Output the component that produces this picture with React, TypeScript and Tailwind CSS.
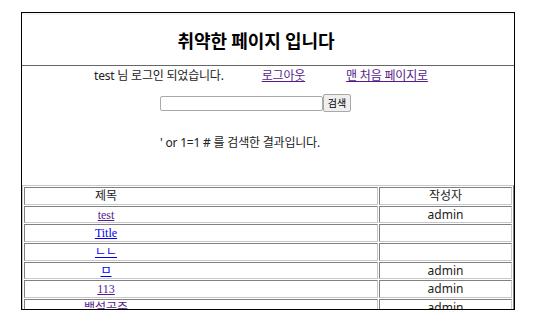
import React from 'react';

const sans = { fontFamily: '"Noto Sans", "Noto Sans CJK KR", sans-serif' };

type Row = { title: string; writer: string; visited: boolean };

const rows: Row[] = [
  { title: 'test', writer: 'admin', visited: true },
  { title: 'Title', writer: '', visited: false },
  { title: 'ㄴㄴ', writer: '', visited: false },
  { title: 'ㅁ', writer: 'admin', visited: false },
  { title: '113', writer: 'admin', visited: true },
  { title: '백설공주', writer: 'admin', visited: true },
];

const cell =
  'p-0 border border-t-[#808080] border-l-[#808080] border-b-[#c8c8c8] border-r-[#c8c8c8]';

export default function App() {
  return (
    <div className="min-h-[333px] bg-white pt-[12px] pl-[21px]" style={sans}>
      <div className="w-[494px] h-[298px] border border-black overflow-hidden text-[#222]">
        {/* 헤더 */}
        <div className="h-[53px] border-b border-[#666] border-t-2 border-t-[#f4f4f4] flex items-center">
          <h1
            className="w-[468px] text-center text-[18px] font-bold text-black"
            style={{ fontFamily: '"Noto Sans CJK KR", sans-serif' }}
          >
            취약한 페이지 입니다
          </h1>
        </div>

        {/* 로그인 정보 */}
        <div className="mt-[2px] pl-[72px] flex items-center h-[16px] text-[12px] leading-[16px] tracking-[-0.2px]">
          <span>test 님 로그인 되었습니다.</span>
          <a href="#" className="ml-[38px] underline text-[#551A8B]">로그아웃</a>
          <a href="#" className="ml-[41px] underline text-[#551A8B]">맨 처음 페이지로</a>
        </div>

        {/* 검색 */}
        <div className="mt-[10px] pl-[138px] flex items-center h-[18px]">
          <input
            type="text"
            className="w-[163px] h-[15px] border border-[#a9a9a9] rounded-[2px] bg-white outline-none"
          />
          <button className="h-[18px] w-[28px] border border-[#a9a9a9] rounded-[2px] bg-[#efefef] text-[10px] leading-none text-black">
            검색
          </button>
        </div>

        <div className="mt-[23px] pl-[138px] h-[16px] text-[12px] leading-[16px] tracking-[-0.2px]">
          ' or 1=1 # 를 검색한 결과입니다.
        </div>

        {/* 게시글 목록 */}
        <table className="mt-[34px] w-[492px] border border-t-[#c8c8c8] border-l-[#c8c8c8] border-r-[#808080] border-b-[#808080] border-separate border-spacing-[1px] text-[12px]">
          <thead>
            <tr>
              <td className={cell}>
                <div className="w-[162px] h-[15.67px] leading-[15.67px] overflow-hidden text-center">제목</div>
              </td>
              <td className={cell + ' w-[133px]'}>
                <div className="h-[15.67px] leading-[15.67px] overflow-hidden text-center">작성자</div>
              </td>
            </tr>
          </thead>
          <tbody>
            {rows.map((r, i) => (
              <tr key={i}>
                <td className={cell}>
                  <div className="w-[162px] h-[15.67px] leading-[15.67px] overflow-hidden text-center">
                    <a
                      href="#"
                      className={r.visited ? 'underline text-[#551A8B]' : 'underline text-[#0000EE]'}
                      style={{ fontFamily: '"Liberation Serif", "Noto Sans CJK KR", serif' }}
                    >
                      {r.title}
                    </a>
                  </div>
                </td>
                <td className={cell}>
                  <div className="h-[15.67px] leading-[15.67px] overflow-hidden text-center">{r.writer}</div>
                </td>
              </tr>
            ))}
          </tbody>
        </table>
      </div>
    </div>
  );
}
